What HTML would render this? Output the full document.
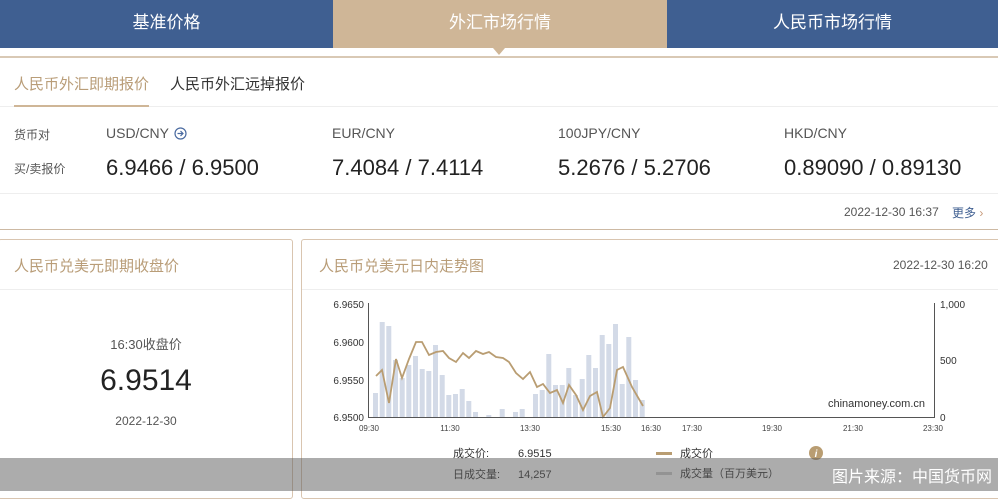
<!DOCTYPE html>
<html><head><meta charset="utf-8"><style>
*{margin:0;padding:0;box-sizing:border-box}
body{width:998px;height:491px;overflow:hidden;background:#fff;font-family:"Liberation Sans","Noto Sans CJK SC",sans-serif;position:relative;color:#333}
.a{position:absolute;white-space:nowrap}
.tab{top:0;height:48px;line-height:46px;text-align:center;color:#fff;font-size:17px}
</style></head><body>
<div class="a tab" style="left:0;width:333px;background:#3f5f91">基准价格</div>
<div class="a tab" style="left:333px;width:334px;background:#cfb697">外汇市场行情</div>
<div class="a tab" style="left:667px;width:331px;background:#3f5f91">人民币市场行情</div>
<div class="a" style="left:493px;top:48px;width:0;height:0;border-left:6px solid transparent;border-right:6px solid transparent;border-top:7px solid #cfb697"></div>
<div class="a" style="left:0;top:56px;width:998px;height:2px;background:#d9c9b5"></div>
<div class="a" style="left:14px;top:73px;font-size:15px;color:#b99d78">人民币外汇即期报价</div>
<div class="a" style="left:170px;top:73px;font-size:15px;color:#333">人民币外汇远掉报价</div>
<div class="a" style="left:0;top:106px;width:998px;height:1px;background:#eee"></div>
<div class="a" style="left:14px;top:105px;width:135px;height:2px;background:#cfb697"></div>
<div class="a" style="left:14px;top:126px;font-size:12px;color:#555">货币对</div>
<div class="a" style="left:14px;top:160px;font-size:12px;color:#555">买/卖报价</div>
<div class="a" style="left:106px;top:125px;font-size:14px;color:#555">USD/CNY</div>
<svg class="a" style="left:174px;top:127px" width="13" height="13" viewBox="0 0 13 13"><circle cx="6.5" cy="6.5" r="5.5" fill="none" stroke="#4a6aa0" stroke-width="1.2"/><path d="M3.5 6.5h5.5M6.5 4l2.5 2.5-2.5 2.5" fill="none" stroke="#4a6aa0" stroke-width="1.2"/></svg>
<div class="a" style="left:332px;top:125px;font-size:14px;color:#555">EUR/CNY</div>
<div class="a" style="left:558px;top:125px;font-size:14px;color:#555">100JPY/CNY</div>
<div class="a" style="left:784px;top:125px;font-size:14px;color:#555">HKD/CNY</div>
<div class="a" style="left:106px;top:155px;font-size:22px;color:#222">6.9466 / 6.9500</div>
<div class="a" style="left:332px;top:155px;font-size:22px;color:#222">7.4084 / 7.4114</div>
<div class="a" style="left:558px;top:155px;font-size:22px;color:#222">5.2676 / 5.2706</div>
<div class="a" style="left:784px;top:155px;font-size:22px;color:#222">0.89090 / 0.89130</div>
<div class="a" style="left:0;top:193px;width:998px;height:1px;background:#eee"></div>
<div class="a" style="left:844px;top:205px;font-size:12px;color:#555">2022-12-30 16:37</div>
<div class="a" style="left:952px;top:204px;font-size:12px;color:#3f5f91">更多 <span style="color:#c79a7a">›</span></div>
<div class="a" style="left:0;top:229px;width:998px;height:1px;background:#cdb9a3"></div>
<div class="a" style="left:-2px;top:239px;width:295px;height:260px;border:1px solid #d9c5b0;border-radius:3px"></div>
<div class="a" style="left:301px;top:239px;width:700px;height:260px;border:1px solid #d9c5b0;border-radius:3px"></div>
<div class="a" style="left:0;top:289px;width:292px;height:1px;background:#eee"></div>
<div class="a" style="left:302px;top:289px;width:696px;height:1px;background:#eee"></div>
<div class="a" style="left:14px;top:255px;font-size:15px;color:#b99d78">人民币兑美元即期收盘价</div>
<div class="a" style="left:319px;top:255px;font-size:15px;color:#b99d78">人民币兑美元日内走势图</div>
<div class="a" style="left:893px;top:258px;font-size:12px;color:#555">2022-12-30 16:20</div>
<div class="a" style="left:0;width:292px;top:334px;text-align:center;font-size:13px;color:#555">16:30收盘价</div>
<div class="a" style="left:0;width:292px;top:364px;text-align:center;font-size:30px;color:#222">6.9514</div>
<div class="a" style="left:0;width:292px;top:414px;text-align:center;font-size:12px;color:#555">2022-12-30</div>
<svg class="a" style="left:0;top:0" width="998" height="491" font-family="Liberation Sans, sans-serif">
<g fill="#d3dae7">
<rect x="373" y="393" width="5" height="24"/><rect x="379.7" y="322" width="5" height="95"/><rect x="386.3" y="326" width="5" height="91"/><rect x="393" y="360" width="5" height="57"/><rect x="399.7" y="378" width="5" height="39"/><rect x="406.3" y="365" width="5" height="52"/><rect x="413" y="356" width="5" height="61"/><rect x="419.7" y="369" width="5" height="48"/><rect x="426.3" y="371" width="5" height="46"/><rect x="433" y="345" width="5" height="72"/><rect x="439.7" y="375" width="5" height="42"/><rect x="446.3" y="395" width="5" height="22"/><rect x="453" y="394" width="5" height="23"/><rect x="459.7" y="389" width="5" height="28"/><rect x="466.3" y="401" width="5" height="16"/><rect x="473" y="412" width="5" height="5"/><rect x="486.3" y="415" width="5" height="2"/><rect x="499.7" y="409" width="5" height="8"/><rect x="513" y="412" width="5" height="5"/><rect x="519.7" y="409" width="5" height="8"/><rect x="533" y="394" width="5" height="23"/><rect x="539.7" y="390" width="5" height="27"/><rect x="546.3" y="354" width="5" height="63"/><rect x="553" y="385" width="5" height="32"/><rect x="559.7" y="385" width="5" height="32"/><rect x="566.3" y="368" width="5" height="49"/><rect x="573" y="395" width="5" height="22"/><rect x="579.7" y="379" width="5" height="38"/><rect x="586.3" y="355" width="5" height="62"/><rect x="593" y="368" width="5" height="49"/><rect x="599.7" y="335" width="5" height="82"/><rect x="606.3" y="344" width="5" height="73"/><rect x="613" y="324" width="5" height="93"/><rect x="619.7" y="384" width="5" height="33"/><rect x="626.3" y="337" width="5" height="80"/><rect x="633" y="380" width="5" height="37"/><rect x="639.7" y="400" width="5" height="17"/>
</g>
<polyline fill="none" stroke="#b99d72" stroke-width="1.8" points="376,376 382,370 389,403 396,359 402,378 409,359 416,342 422,342 429,355 436,352 443,351 449,358 456,362 463,353 469,358 476,351 483,354 489,352 496,357 503,358 509,362 516,373 523,379 530,372 537,387 543,384 550,393 557,390 563,403 569,385 576,395 583,410 590,396 597,392 603,417 610,408 617,370 623,367 632,387 643,406"/>
<path d="M368.5 303V417.5H934.5V303" fill="none" stroke="#555" stroke-width="1"/>
<g font-size="10" fill="#333" text-anchor="end"><text x="364" y="308">6.9650</text><text x="364" y="346">6.9600</text><text x="364" y="384">6.9550</text><text x="364" y="421">6.9500</text></g>
<g font-size="10" fill="#333"><text x="940" y="308">1,000</text><text x="940" y="364">500</text><text x="940" y="421">0</text></g>
<g font-size="8" fill="#444" text-anchor="middle"><text x="369" y="431">09:30</text><text x="450" y="431">11:30</text><text x="530" y="431">13:30</text><text x="611" y="431">15:30</text><text x="651" y="431">16:30</text><text x="692" y="431">17:30</text><text x="772" y="431">19:30</text><text x="853" y="431">21:30</text><text x="933" y="431">23:30</text></g>
<text x="828" y="407" font-size="11" fill="#333">chinamoney.com.cn</text>
<g font-size="11" fill="#333" font-family="Liberation Sans, Noto Sans CJK SC, sans-serif"><text x="453" y="457">成交价:</text><text x="518" y="457">6.9515</text><text x="453" y="478">日成交量:</text><text x="518" y="478">14,257</text><text x="680" y="457">成交价</text><text x="680" y="477">成交量（百万美元）</text></g>
<rect x="656" y="452" width="16" height="3" fill="#b99d72"/><rect x="656" y="472" width="16" height="3" fill="#ccc"/>
<circle cx="816" cy="453" r="7" fill="#b99d72"/><text x="816" y="457" font-size="10" fill="#fff" text-anchor="middle" font-style="italic" font-weight="bold">i</text>
</svg>
<div class="a" style="left:0;top:458px;width:998px;height:33px;background:rgba(90,90,90,0.5)"></div>
<div class="a" style="left:832px;top:463px;font-size:16px;color:#fff">图片来源：中国货币网</div>
</body></html>
